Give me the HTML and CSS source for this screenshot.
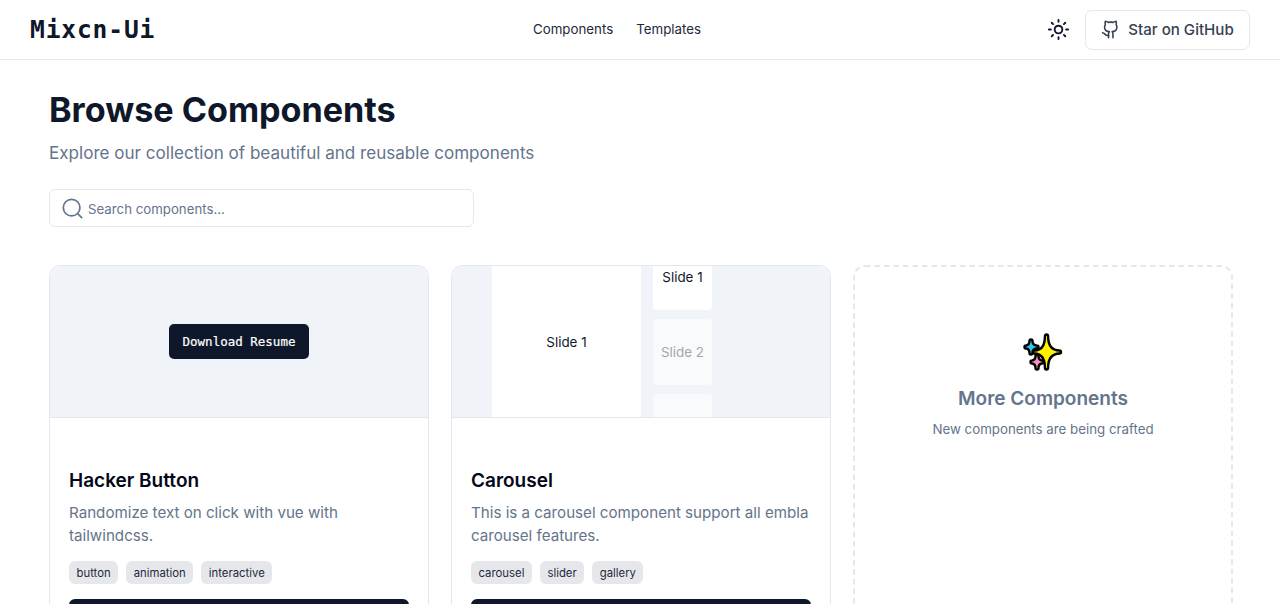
FILE: index.html
```html
<!DOCTYPE html>
<html lang="en">
<head>
<meta charset="utf-8">
<title>Mixcn-Ui</title>
<link rel="stylesheet" href="styles.css">
</head>
<body>
<header class="header">
  <a class="brand">Mixcn-Ui</a>
  <nav class="nav"><a>Components</a><a>Templates</a></nav>
  <div class="actions">
    <svg class="sun" viewBox="0 0 24 24" fill="none" stroke="currentColor" stroke-width="2" stroke-linecap="round"><circle cx="12" cy="12" r="4"/><path d="M12 2v2M12 20v2M4.93 4.93l1.41 1.41M17.66 17.66l1.41 1.41M2 12h2M20 12h2M6.34 17.66l-1.41 1.41M19.07 4.93l-1.41 1.41"/></svg>
    <a class="github">
      <svg class="cat" viewBox="0 0 24 24" fill="none" stroke="currentColor" stroke-width="2" stroke-linecap="round" stroke-linejoin="round"><path d="M9.500 22.500v-5c0-1.200.3-2 1-2.800-4-.4-6-2-6-5.700 0-1.200.3-2.200 1-3-.4-1.500-.4-3 0-4.500 1.500.1 2.700.8 3.700 1.500 2-.4 4.200-.4 6.200 0 1-.7 2.200-1.400 3.700-1.500.4 1.500.4 3 0 4.500.7.800 1 1.800 1 3 0 3.700-2 5.300-6 5.700.7.800 1 1.600 1 2.800v5"/><path d="M9.500 19.500c-4 1.200-4.500-3-7.500-3.500"/></svg>
      <span>Star on GitHub</span>
    </a>
  </div>
</header>
<main class="main">
  <h1 class="title">Browse Components</h1>
  <p class="subtitle">Explore our collection of beautiful and reusable components</p>
  <div class="search">
    <svg class="glass" viewBox="0 0 24 24" fill="none" stroke="currentColor" stroke-width="2" stroke-linecap="round"><circle cx="11" cy="11" r="9.500"/><path d="m22.500 22.500-4.500-4.500"/></svg>
    <span class="placeholder">Search components...</span>
  </div>
  <div class="grid">
    <article class="card">
      <div class="preview"><span class="resume">Download Resume</span></div>
      <div class="body">
        <h2 class="name">Hacker Button</h2>
        <p class="text">Randomize text on click with vue with tailwindcss.</p>
        <div class="tags"><span class="tag">button</span><span class="tag">animation</span><span class="tag">interactive</span></div>
        <div class="view"></div>
      </div>
    </article>
    <article class="card">
      <div class="preview slides">
        <div class="slide-main">Slide 1</div>
        <div class="thumbs"><div class="thumb active">Slide 1</div><div class="thumb">Slide 2</div><div class="thumb"></div></div>
      </div>
      <div class="body">
        <h2 class="name">Carousel</h2>
        <p class="text">This is a carousel component support all embla carousel features.</p>
        <div class="tags"><span class="tag">carousel</span><span class="tag">slider</span><span class="tag">gallery</span></div>
        <div class="view"></div>
      </div>
    </article>
    <article class="more">
      <svg class="dashes"><rect x="1" y="1" width="378" height="440" rx="11"/></svg>
      <svg class="sparkles" viewBox="0 0 40 38" stroke="#000" stroke-width="2.4" stroke-linejoin="round">
        <path fill="#f78fc0" d="M14 21.500q1.500 0 1.500 1.500 0 4 3.500 4.500 1.500 0 1.500 1.500t-1.500 1.500q-3.500.500-3.500 4.500 0 1.500-1.500 1.500t-1.500-1.500q0-4-3.500-4.500-1.500 0-1.500-1.500t1.500-1.500q3.500-.500 3.500-4.500 0-1.500 1.500-1.500z"/>
        <path fill="#31c8ee" d="M8 6.500q1.500 0 1.500 1.500 0 4 4 4.500 2 0 2 1.500t-2 1.500q-4 .5-4 4.500 0 1.500-1.500 1.500t-1.500-1.500q0-4-3.500-4.500-1.500 0-1.500-1.500t1.500-1.500q3.500-.5 3.500-4.500 0-1.500 1.500-1.500z"/>
        <path fill="#fff100" d="M23.500 1.500q1.600 0 1.600 2 0 13.700 11.400 14 1.500 0 1.500 1.500t-1.500 1.500q-11.400.5-11.400 14 0 2-1.600 2t-1.600-2q0-13.500-10.400-14-1.500 0-1.500-1.500t1.500-1.500q10.400-.3 10.400-14 0-2 1.600-2z"/>
      </svg>
      <h2 class="more-title">More Components</h2>
      <p class="more-text">New components are being crafted</p>
    </article>
  </div>
</main>
</body>
</html>
```
FILE: styles.css
```css
* { box-sizing: border-box; }
body { margin: 0; height: 604px; overflow: hidden; background: #fff; color: #0f172a; font-family: Inter, sans-serif; }
h1, h2, p { margin: 0; }
svg { display: block; flex: none; }
.header { height: 60px; border-bottom: 1px solid #e5eaf1; padding: 0 30px; display: grid; grid-template-columns: 1fr auto 1fr; align-items: center; }
.brand { font: bold 24.6px/32px "DejaVu Sans Mono", monospace; letter-spacing: 0.84px; }
.nav { display: flex; gap: 23px; font-size: 13.3px; line-height: 20px; padding: 0 46px 1px 0; color: #1e293b; }
.actions { display: flex; justify-content: flex-end; align-items: center; gap: 15px; }
.sun { width: 23px; height: 23px; }
.github { width: 165px; height: 40px; border: 1px solid #e5e7eb; border-radius: 7px; display: flex; align-items: center; justify-content: center; gap: 8px; color: #374151; font-size: 15.1px; font-weight: 500; white-space: nowrap; }
.cat { width: 19px; height: 19px; }
.main { padding: 27px 47px 0 49px; }
.title { font-size: 34.15px; line-height: 46px; font-weight: 700; }
.subtitle { margin-top: 6px; font-size: 17.07px; line-height: 27px; color: #64748b; }
.search { margin-top: 23px; width: 425px; height: 38px; border: 1px solid #e2e8f0; border-radius: 6px; display: flex; align-items: center; gap: 5px; padding-left: 12px; font-size: 13.25px; color: #64748b; }
.glass { width: 21px; height: 21px; }
.placeholder { padding-top: 2px; }
.grid { margin-top: 38px; display: grid; grid-template-columns: repeat(3, 380px); gap: 22px; }
.card { height: 430px; border: 1px solid #e2e8f0; border-radius: 11px; overflow: hidden; }
.preview { height: 152px; background: #f0f4f9; border-bottom: 1px solid #e2e8f0; display: flex; align-items: center; justify-content: center; overflow: hidden; }
.resume { width: 140px; height: 35px; border-radius: 5px; background: #0f172a; color: #fff; font: 12.5px/35px "DejaVu Sans Mono", monospace; -webkit-text-stroke: 0.2px #fff; text-align: center; }
.slides { justify-content: flex-start; align-items: stretch; gap: 12px; padding-left: 40px; font-size: 13.4px; }
.slide-main { width: 149px; background: #fff; display: flex; align-items: center; justify-content: center; }
.thumbs { display: flex; flex-direction: column; gap: 9px; margin-top: -22px; }
.thumb { width: 59px; height: 66px; flex: none; background: #f8fafc; color: #a3a7ad; border-radius: 4px; display: flex; align-items: center; justify-content: center; }
.active { background: #fff; color: #0f172a; }
.body { padding: 49px 19px 0; }
.name { font-size: 19px; line-height: 28px; font-weight: 600; color: #020617; }
.text { margin-top: 6px; font-size: 15.15px; line-height: 23px; color: #64748b; }
.tags { margin-top: 14px; display: flex; gap: 8px; }
.tag { height: 23px; padding: 0 7.5px; border-radius: 6px; background: #e5e7eb; font-size: 11.35px; line-height: 24px; color: #1e293b; }
.view { margin-top: 15px; height: 38px; border-radius: 6px; background: #0f172a; }
.more { height: 430px; position: relative; padding-top: 68px; display: flex; flex-direction: column; align-items: center; color: #64748b; }
.dashes { position: absolute; inset: 0; width: 380px; height: 430px; fill: none; stroke: #e2e8f0; stroke-width: 2; stroke-dasharray: 5.5 4; }
.sparkles { width: 40px; height: 38px; }
.more-title { margin-top: 14px; font-size: 19px; line-height: 28px; font-weight: 600; }
.more-text { margin-top: 6px; font-size: 13.3px; line-height: 20px; }
```
